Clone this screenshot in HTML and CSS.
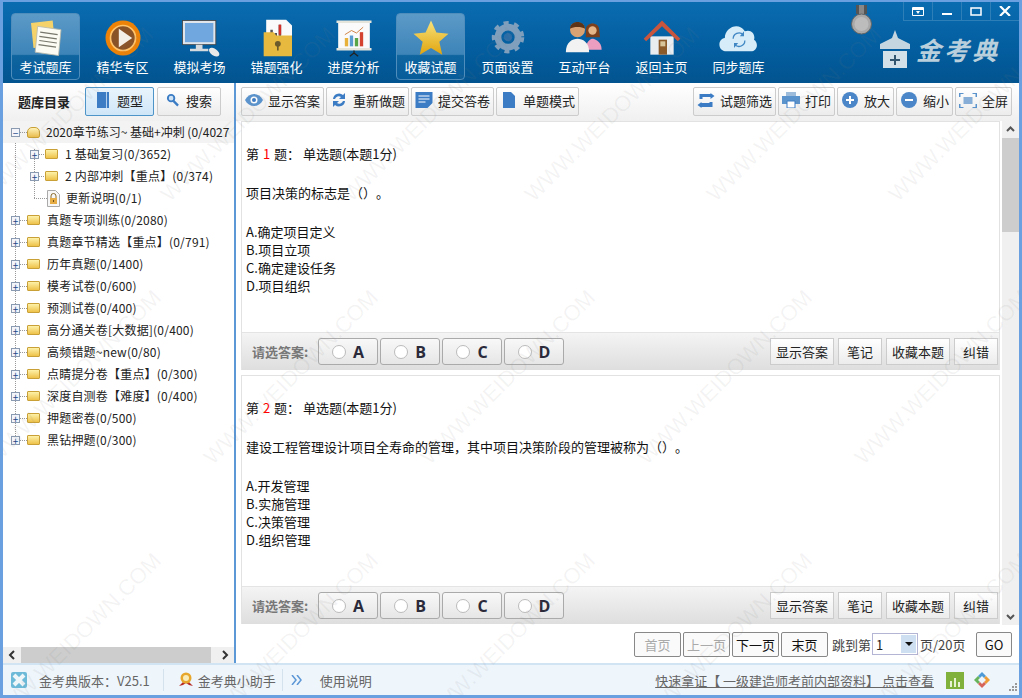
FILE: index.html
```html
<!DOCTYPE html>
<html lang="zh-CN">
<head>
    <meta charset="UTF-8">
    <title>金考典</title>
    <link rel="stylesheet" href="styles.css">
</head>
<body>
<div class="window">
    <!-- top bar -->
    <div class="top-bar">
        <div class="nav-item active">
            <svg viewBox="0 0 48 48"><path d="M6 6l26-3 3 30-26 3z" fill="#f6d36a"/><path d="M14 10l28 4-3 31-28-4z" fill="#fbfbf4" stroke="#b9b9a8"/><path d="M17 17l21 3M16 22l21 3M16 27l21 3M15 32l21 3" stroke="#77776c" stroke-width="1.5"/></svg>
            <span>考试题库</span>
        </div>
        <div class="nav-item">
            <svg viewBox="0 0 48 48"><circle cx="24" cy="24" r="21" fill="#ec8208"/><circle cx="24" cy="24" r="15" fill="#8a5327" stroke="#ffc46b" stroke-width="2"/><path d="M19 13l16 11-16 11z" fill="#f4efe6"/></svg>
            <span>精华专区</span>
        </div>
        <div class="nav-item">
            <svg viewBox="0 0 48 48"><rect x="3" y="3" width="40" height="29" fill="#dfe5ea" stroke="#444"/><rect x="6" y="6" width="34" height="23" fill="#6fa7de"/><path d="M19 32h8v5h-8zM12 37h22v3H12z" fill="#d5dade"/><ellipse cx="41" cy="41" rx="7" ry="4" fill="#e8e8e8" transform="rotate(35 41 41)"/></svg>
            <span>模拟考场</span>
        </div>
        <div class="nav-item">
            <svg viewBox="0 0 48 48"><path d="M11 2h24l7 7v22H11z" fill="#fafafa"/><path d="M16 14h3v14h-3zM21 18h3v10h-3zM26 8h3v20h-3z" fill="#555"/><path d="M26 8h3v12h-3z" fill="#d3302a"/><path d="M8 17h12l3 4h19v25H8z" fill="#e8b93f"/><circle cx="25" cy="31" r="3.500" fill="#6b5a2b"/><path d="M24 33h2v6h-2z" fill="#6b5a2b"/></svg>
            <span>错题强化</span>
        </div>
        <div class="nav-item">
            <svg viewBox="0 0 48 48"><path d="M3 3h42v3H3z" fill="#e5e5dc"/><path d="M5 6h38v30H5z" fill="#fafafa"/><path d="M3 36h42v3H3z" fill="#e5e5dc"/><path d="M13 24h4v10h-4z" fill="#e8b23a"/><path d="M19 21h4v13h-4z" fill="#5a9bd0"/><path d="M25 24h4v10h-4z" fill="#58a548"/><path d="M31 17h4v17h-4z" fill="#d3432f"/><path d="M13 20l8-5 6 3 8-7" stroke="#c9702a" fill="none"/><path d="M24 39v4M24 42l-5 4M24 42l5 4" stroke="#222" stroke-width="1.5"/></svg>
            <span>进度分析</span>
        </div>
        <div class="nav-item active">
            <svg viewBox="0 0 48 48"><defs><linearGradient id="star" x1="0" y1="0" x2="0" y2="1"><stop offset="0" stop-color="#f7e27a"/><stop offset="1" stop-color="#e0a40e"/></linearGradient></defs><path d="M24 3l6.500 14.500L45 19l-11 9.500L37.500 44 24 36l-13.500 8L14 28.500 3 19l14.500-1.500z" fill="url(#star)"/></svg>
            <span>收藏试题</span>
        </div>
        <div class="nav-item">
            <svg viewBox="0 0 48 48"><circle cx="24" cy="23" r="12" fill="none" stroke="#7f9fbd" stroke-width="8"/><circle cx="24" cy="23" r="17" fill="none" stroke="#7f9fbd" stroke-width="5" stroke-dasharray="6 6.400"/><circle cx="24" cy="23" r="5" fill="#2d6da6"/></svg>
            <span>页面设置</span>
        </div>
        <div class="nav-item">
            <svg viewBox="0 0 48 48"><circle cx="33" cy="14" r="7" fill="#c98a55"/><path d="M25 14c0-10 16-10 16 0l1 9H25z" fill="#7a3f1c"/><circle cx="33" cy="15" r="5" fill="#e5b58a"/><path d="M25 38c0-10 6-13 8-13s11 3 11 13z" fill="#ec9ec0"/><path d="M1 41c0-12 8-16 14-16s14 4 14 16z" fill="#f2f2f2"/><circle cx="15" cy="14" r="9" fill="#d9a273"/><path d="M6 13c0-11 18-11 18 0-4-3-14-3-18 0z" fill="#5d3416"/></svg>
            <span>互动平台</span>
        </div>
        <div class="nav-item">
            <svg viewBox="0 0 48 48"><path d="M10 22h28v22H10z" fill="#e9edf0"/><path d="M2 25L24 3l22 22-3 3L24 10 5 28z" fill="#c8553d"/><path d="M20 26h10v18H20z" fill="#8a5a2b"/><path d="M22 28h6v6h-6z" fill="#d8c49a"/></svg>
            <span>返回主页</span>
        </div>
        <div class="nav-item">
            <svg viewBox="0 0 48 48"><path d="M9 40c-11 0-11-15-2-16 0-13 17-20 24-8 8-3 13 4 11 10 6 4 4 14-4 14z" fill="#d6ecf8"/><path d="M17 25a7 7 0 0 1 12-5M31 27a7 7 0 0 1-12 5" fill="none" stroke="#3f86c4" stroke-width="1.500"/><path d="M30 16v6h-5zM18 36v-6h5z" fill="#3f86c4"/></svg>
            <span>同步题库</span>
        </div>
        <svg class="medal" width="21" height="30" viewBox="0 0 21 30"><path d="M5 0h11v9H5z" fill="#555"/><path d="M8 0h5v9H8z" fill="#888"/><circle cx="10.500" cy="19" r="10" fill="#a9a9a9" stroke="#666"/><circle cx="10.500" cy="19" r="7" fill="#bcbcbc"/></svg>
        <div class="brand">
            <svg width="30" height="38" viewBox="0 0 30 38"><path d="M15 0l3 8 12 6v5H0v-5l12-6z" fill="#c5d6e0"/><path d="M3 21h24v17H3z" fill="#d3e0e8"/><path d="M14 25h2v10h-2zM10 29h10v2H10z" fill="#34556e"/></svg>
            <span>金考典</span>
        </div>
        <div class="win-btns">
            <span class="win-btn"><svg width="12" height="9" viewBox="0 0 12 9"><path d="M.5.500h11v8H.5z" fill="none" stroke="#fff"/><path d="M1 1h10v2H1zM4 4h4L6 7z" fill="#fff"/></svg></span>
            <span class="win-btn"><svg width="12" height="9" viewBox="0 0 12 9"><path d="M1 6h10v2H1z" fill="#fff"/></svg></span>
            <span class="win-btn"><svg width="12" height="9" viewBox="0 0 12 9"><path d="M1 1h10v7H1z" fill="none" stroke="#fff" stroke-width="1.500"/></svg></span>
            <span class="win-btn"><svg width="12" height="10" viewBox="0 0 12 10"><path d="M1 0l5 5 5-5M1 10l5-5 5 5" fill="none" stroke="#fff" stroke-width="2.200"/></svg></span>
        </div>
    </div>

    <div class="main">
        <!-- left tree -->
        <div class="side">
            <div class="side-head">
                <strong class="side-title">题库目录</strong>
                <button class="tool-btn selected">
                    <svg width="14" height="16" viewBox="0 0 14 16"><path d="M1 0h12v16H1z" fill="#3b7cc4"/><path d="M10 0h1v16h-1z" fill="#b7d3ee"/></svg>题型
                </button>
                <button class="tool-btn search">
                    <svg width="14" height="16" viewBox="0 0 14 16"><circle cx="5.500" cy="6" r="3.500" fill="#cfe3f5" stroke="#3b7cc4" stroke-width="2"/><path d="M8 9l5 5" stroke="#3b7cc4" stroke-width="2.500"/></svg>搜索
                </button>
            </div>
            <div class="tree">
                <div class="tree-guide"></div>
                <div class="tree-guide inner"></div>
                <div class="tree-row hover"><i class="toggle">−</i><i class="folder open"></i><span>2020章节练习~ 基础+冲刺 (0/4027</span></div>
                <div class="tree-row sub"><i class="toggle">+</i><i class="folder"></i><span>1&nbsp;基础复习(0/3652)</span></div>
                <div class="tree-row sub"><i class="toggle">+</i><i class="folder"></i><span>2&nbsp;内部冲刺【重点】(0/374)</span></div>
                <div class="tree-row sub"><i class="toggle none"></i><svg class="lock-doc" width="13" height="17" viewBox="0 0 13 17"><path d="M.5.500h8l4 4v12H.5z" fill="#f7f7f7" stroke="#aaa"/><path d="M4 8V6a2.500 2.500 0 0 1 5 0v2" fill="none" stroke="#8a6a2a"/><path d="M3 8h7v6H3z" fill="#e6ad46"/><path d="M6 10h1v2H6z" fill="#6b4f1a"/></svg><span>更新说明(0/1)</span></div>
                <div class="tree-row"><i class="toggle">+</i><i class="folder"></i><span>真题专项训练(0/2080)</span></div>
                <div class="tree-row"><i class="toggle">+</i><i class="folder"></i><span>真题章节精选【重点】(0/791)</span></div>
                <div class="tree-row"><i class="toggle">+</i><i class="folder"></i><span>历年真题(0/1400)</span></div>
                <div class="tree-row"><i class="toggle">+</i><i class="folder"></i><span>模考试卷(0/600)</span></div>
                <div class="tree-row"><i class="toggle">+</i><i class="folder"></i><span>预测试卷(0/400)</span></div>
                <div class="tree-row"><i class="toggle">+</i><i class="folder"></i><span>高分通关卷[大数据](0/400)</span></div>
                <div class="tree-row"><i class="toggle">+</i><i class="folder"></i><span>高频错题~new(0/80)</span></div>
                <div class="tree-row"><i class="toggle">+</i><i class="folder"></i><span>点睛提分卷【重点】(0/300)</span></div>
                <div class="tree-row"><i class="toggle">+</i><i class="folder"></i><span>深度自测卷【难度】(0/400)</span></div>
                <div class="tree-row"><i class="toggle">+</i><i class="folder"></i><span>押题密卷(0/500)</span></div>
                <div class="tree-row"><i class="toggle">+</i><i class="folder"></i><span>黑钻押题(0/300)</span></div>
            </div>
            <div class="hscroll">
                <svg class="arrow" width="18" height="16" viewBox="0 0 18 16"><path d="M11 4L7 8l4 4" fill="none" stroke="#333" stroke-width="2"/></svg>
                <div class="hthumb"></div>
                <svg class="arrow" width="18" height="16" viewBox="0 0 18 16"><path d="M7 4l4 4-4 4" fill="none" stroke="#333" stroke-width="2"/></svg>
            </div>
        </div>

        <!-- content -->
        <div class="content">
            <div class="toolbar">
                <button class="tool-btn">
                    <svg width="18" height="12" viewBox="0 0 18 12"><path d="M0 6c4-8 14-8 18 0-4 8-14 8-18 0z" fill="#5b93cc"/><circle cx="9" cy="6" r="3.500" fill="#fff"/><circle cx="9" cy="6" r="2" fill="#3b7cc4"/></svg>显示答案
                </button>
                <button class="tool-btn">
                    <svg width="18" height="16" viewBox="0 0 18 16"><path d="M3 7a6 6 0 0 1 10-4l2-2v6h-6l2-2a4 4 0 0 0-6 2zM15 9a6 6 0 0 1-10 4l-2 2V9h6l-2 2a4 4 0 0 0 6-2z" fill="#3b7cc4"/></svg>重新做题
                </button>
                <button class="tool-btn">
                    <svg width="17" height="16" viewBox="0 0 17 16"><path d="M0 0h17v11l-5 5H0z" fill="#3b7cc4"/><path d="M3 4h11M3 7h11M3 10h7" stroke="#fff"/></svg>提交答卷
                </button>
                <button class="tool-btn">
                    <svg width="14" height="16" viewBox="0 0 14 16"><path d="M1 0h8l4 4v12H1z" fill="#3b7cc4"/></svg>单题模式
                </button>
                <div class="spacer"></div>
                <button class="tool-btn">
                    <svg width="17" height="15" viewBox="0 0 17 15"><path d="M2 6V1h11V0l4 3-4 3V4H5v2zM15 9v5H4v1l-4-3 4-3v1h8V9z" fill="#3b7cc4"/></svg>试题筛选
                </button>
                <button class="tool-btn">
                    <svg width="18" height="16" viewBox="0 0 18 16"><path d="M4 0h10v4H4z" fill="#9dbcdc"/><path d="M0 4h18v8H0z" fill="#5b93cc"/><path d="M5 9h8v7H5z" fill="#fff" stroke="#3b7cc4"/></svg>打印
                </button>
                <button class="tool-btn">
                    <svg width="16" height="16" viewBox="0 0 16 16"><circle cx="8" cy="8" r="8" fill="#4a86c8"/><path d="M4 7h8v2H4zM7 4h2v8H7z" fill="#fff"/></svg>放大
                </button>
                <button class="tool-btn">
                    <svg width="16" height="16" viewBox="0 0 16 16"><circle cx="8" cy="8" r="8" fill="#4a86c8"/><path d="M4 7h8v2H4z" fill="#fff"/></svg>缩小
                </button>
                <button class="tool-btn">
                    <svg width="17" height="15" viewBox="0 0 17 15"><path d="M0 4V0h4M13 0h4v4M17 11v4h-4M4 15H0v-4" fill="none" stroke="#5b93cc" stroke-width="2"/><path d="M4 4h9v7H4z" fill="#86aed6"/></svg>全屏
                </button>
            </div>

            <div class="question-wrap">
                <div class="questions">
                    <div class="question">
                        <div class="q-body">
                            <p class="q-title">第 <em>1</em> 题： 单选题(本题1分)</p>
                            <p class="q-stem">项目决策的标志是（）。</p>
                            <p class="q-opts">A.确定项目定义<br>B.项目立项<br>C.确定建设任务<br>D.项目组织</p>
                        </div>
                        <div class="answer-bar">
                            <span class="answer-label">请选答案:</span>
                            <button class="opt-btn"><i></i>A</button>
                            <button class="opt-btn"><i></i>B</button>
                            <button class="opt-btn"><i></i>C</button>
                            <button class="opt-btn"><i></i>D</button>
                            <div class="spacer"></div>
                            <button class="act-btn">显示答案</button>
                            <button class="act-btn short">笔记</button>
                            <button class="act-btn">收藏本题</button>
                            <button class="act-btn short">纠错</button>
                        </div>
                    </div>
                    <div class="question">
                        <div class="q-body">
                            <p class="q-title">第 <em>2</em> 题： 单选题(本题1分)</p>
                            <p class="q-stem">建设工程管理设计项目全寿命的管理，其中项目决策阶段的管理被称为（）。</p>
                            <p class="q-opts">A.开发管理<br>B.实施管理<br>C.决策管理<br>D.组织管理</p>
                        </div>
                        <div class="answer-bar">
                            <span class="answer-label">请选答案:</span>
                            <button class="opt-btn"><i></i>A</button>
                            <button class="opt-btn"><i></i>B</button>
                            <button class="opt-btn"><i></i>C</button>
                            <button class="opt-btn"><i></i>D</button>
                            <div class="spacer"></div>
                            <button class="act-btn">显示答案</button>
                            <button class="act-btn short">笔记</button>
                            <button class="act-btn">收藏本题</button>
                            <button class="act-btn short">纠错</button>
                        </div>
                    </div>
                </div>
                <div class="vscroll">
                    <svg class="v-arrow" width="17" height="17" viewBox="0 0 17 17"><path d="M5 10l3.500-3.500L12 10" fill="none" stroke="#555" stroke-width="2"/></svg>
                    <div class="vthumb"></div>
                    <div class="v-rest"></div>
                    <svg class="v-arrow" width="17" height="17" viewBox="0 0 17 17"><path d="M5 7l3.500 3.500L12 7" fill="none" stroke="#555" stroke-width="2"/></svg>
                </div>
            </div>

            <div class="pager">
                <button class="page-btn off">首页</button>
                <button class="page-btn off">上一页</button>
                <button class="page-btn">下一页</button>
                <button class="page-btn">末页</button>
                <span class="jump">跳到第</span>
                <div class="page-select"><span>1</span><i></i></div>
                <span class="pages">页/20页</span>
                <button class="page-btn go">GO</button>
            </div>
        </div>
    </div>

    <!-- status bar -->
    <div class="status-bar">
        <svg class="st-logo" width="16" height="16" viewBox="0 0 16 16"><rect width="16" height="16" rx="2" fill="#6dbad8"/><path d="M3 3l10 10M13 3L3 13" stroke="#eef6fa" stroke-width="4"/></svg>
        <span class="st-version">金考典版本：V25.1</span>
        <span class="st-sep"></span>
        <svg class="st-medal" width="16" height="16" viewBox="0 0 16 16"><path d="M1 14l5-5 4 0 5 5-4-1-3-2-3 2z" fill="#b52b25"/><circle cx="8" cy="6" r="5.500" fill="#e7a72c"/><circle cx="8" cy="6" r="3" fill="#f9ecb8"/></svg>
        <span class="st-helper">金考典小助手</span>
        <span class="st-sep"></span>
        <svg class="st-more" width="11" height="10" viewBox="0 0 11 10"><path d="M1 0l4 5-4 5M6 0l4 5-4 5" fill="none" stroke="#5c97d6" stroke-width="1.500"/></svg>
        <span class="st-help">使用说明</span>
        <div class="spacer"></div>
        <span class="st-link">快速拿证【 一级建造师考前内部资料】 点击查看</span>
        <svg class="st-chart" width="18" height="17" viewBox="0 0 18 17"><rect width="18" height="17" fill="#7fb13c"/><path d="M4 9h2v6H4zM8 6h2v9H8zM12 10h2v5h-2z" fill="#e8f3d3"/></svg>
        <svg class="st-app" width="16" height="16" viewBox="0 0 16 16"><path d="M8 0l4 4-2 2-2-2-2 2-2-2z" fill="#4d9ad6"/><path d="M12 4l4 4-4 4-2-2 2-2-2-2z" fill="#ee9a35"/><path d="M4 4l2 2-2 2 2 2-2 2-4-4z" fill="#68b45c"/><path d="M6 10l2 2 2-2 2 2-4 4-4-4z" fill="#d5655a"/></svg>
        <svg class="st-grip" width="8" height="8" viewBox="0 0 8 8"><path d="M6 0h2v2H6zM3 3h2v2H3zM6 3h2v2H6zM0 6h2v2H0zM3 6h2v2H3zM6 6h2v2H6z" fill="#999"/></svg>
    </div>

    <!-- watermark -->
    <div class="watermark">
        <div class="wm-row first">
            <span>WWW.WEIDOWN.COM</span><span>WWW.WEIDOWN.COM</span><span>WWW.WEIDOWN.COM</span><span>WWW.WEIDOWN.COM</span><span>WWW.WEIDOWN.COM</span><span>WWW.WEIDOWN.COM</span>
        </div>
        <div class="wm-row">
            <span>WWW.WEIDOWN.COM</span><span>WWW.WEIDOWN.COM</span><span>WWW.WEIDOWN.COM</span><span>WWW.WEIDOWN.COM</span><span>WWW.WEIDOWN.COM</span>
        </div>
        <div class="wm-row">
            <span>WWW.WEIDOWN.COM</span><span>WWW.WEIDOWN.COM</span><span>WWW.WEIDOWN.COM</span><span>WWW.WEIDOWN.COM</span><span>WWW.WEIDOWN.COM</span>
        </div>
    </div>
</div>
</body>
</html>
```

FILE: styles.css
```css
* {
    margin: 0;
    padding: 0;
    box-sizing: border-box;
}

body {
    width: 1022px;
    height: 698px;
    overflow: hidden;
    background: #6a9fe0;
    font-family: "Noto Sans CJK SC", "Liberation Sans", sans-serif;
    font-size: 13px;
    color: #222;
    text-spacing-trim: space-all;
}

.window {
    position: relative;
    width: 1022px;
    height: 698px;
    border: 3px solid #6a9fe0;
    border-top: 2px solid #6a9fe0;
    display: flex;
    flex-direction: column;
    background: #fff;
}

.spacer {
    flex: 1;
}

/* top bar */
.top-bar {
    position: relative;
    height: 81px;
    flex: none;
    display: flex;
    gap: 8px;
    padding: 11px 0 0 8px;
    background: linear-gradient(180deg, #0a6cb0 0%, #035d9e 60%, #02548f 100%);
}

.nav-item {
    width: 69px;
    height: 67px;
    flex: none;
    display: flex;
    flex-direction: column;
    align-items: center;
    color: #fff;
    font-size: 13px;
    line-height: 18px;
    border: 1px solid transparent;
    border-radius: 4px;
    padding-top: 4px;
}

.nav-item svg {
    width: 40px;
    height: 40px;
    flex: none;
}

.nav-item.active {
    border-color: #4f8dbd;
    background: linear-gradient(180deg, #5c9ac8 0%, #3d84b8 62%, #0f659f 64%, #075c9a 100%);
}

.medal {
    position: absolute;
    left: 848px;
    top: 3px;
}

.brand {
    position: absolute;
    left: 877px;
    top: 28px;
    display: flex;
    align-items: center;
    gap: 6px;
    color: #b9cfdc;
    font-size: 25px;
    font-weight: 700;
    font-style: italic;
    letter-spacing: 3px;
    line-height: 38px;
}

.win-btns {
    position: absolute;
    right: 0;
    top: 0;
    display: flex;
}

.win-btn {
    width: 29px;
    height: 19px;
    display: flex;
    align-items: center;
    justify-content: center;
    border-left: 1px solid #2e7fb8;
    border-bottom: 1px solid #2e7fb8;
}

.main {
    flex: 1;
    min-height: 0;
    display: flex;
}

/* left side */
.side {
    width: 233px;
    flex: none;
    border-right: 2px solid #5c97d6;
    display: flex;
    flex-direction: column;
}

.side-head {
    height: 38px;
    flex: none;
    display: flex;
    align-items: center;
    gap: 3px;
    padding: 0 0 2px 15px;
    background: linear-gradient(180deg, #fff, #f0f0f0);
}

.side-title {
    width: 64px;
    font-size: 13px;
}

.tool-btn {
    height: 29px;
    display: flex;
    align-items: center;
    gap: 5px;
    padding: 0 3px 2px 3px;
    background: linear-gradient(180deg, #fff, #ececec);
    border: 1px solid #ccc;
    border-radius: 2px;
    font-family: inherit;
    font-size: 13px;
    color: #222;
    white-space: nowrap;
}

.toolbar .tool-btn svg {
    width: 18px;
}

.side-head .tool-btn {
    width: 69px;
    padding: 0 10px 2px;
    gap: 7px;
}

.side-head .tool-btn.search {
    width: 64px;
    padding: 0 8px 2px;
}

.tool-btn.selected {
    background: linear-gradient(180deg, #e9f4fc, #cfe6f8);
    border-color: #4d94c8;
}

.tree {
    position: relative;
    flex: 1;
    min-height: 0;
    overflow: hidden;
    font-size: 12px;
    letter-spacing: .2px;
}

.tree-guide {
    position: absolute;
    left: 12px;
    top: 15px;
    height: 304px;
    border-left: 1px dotted #999;
}

.tree-guide.inner {
    left: 31px;
    top: 28px;
    height: 49px;
}

.tree-row {
    position: relative;
    height: 22px;
    display: flex;
    align-items: center;
    white-space: nowrap;
    padding-left: 8px;
    line-height: 22px;
}

.tree-row.hover {
    background: #f3f3f3;
    letter-spacing: 0;
}

.tree-row.sub {
    padding-left: 27px;
}

.toggle {
    position: relative;
    width: 9px;
    height: 9px;
    flex: none;
    border: 1px solid #8a9ab0;
    background: #f3f5fa;
    margin-right: 7px;
    font-style: normal;
    font-size: 10px;
    line-height: 7px;
    text-align: center;
    color: #234a88;
}

.toggle::after {
    content: "";
    position: absolute;
    left: 8px;
    top: 3px;
    width: 7px;
    border-top: 1px dotted #999;
}

.tree-row.sub .toggle {
    margin-right: 6px;
}

.toggle.none {
    border: none;
    background: none;
}

.toggle.none::after {
    left: 4px;
    top: 4px;
    width: 13px;
}

.folder {
    position: relative;
    width: 13px;
    height: 10px;
    flex: none;
    margin-right: 7px;
    background: linear-gradient(180deg, #fdf1a8, #eec24a);
    border: 1px solid #c9a035;
    border-radius: 1px;
}

.folder.open {
    height: 11px;
    background: linear-gradient(180deg, #fff3b8, #e8bc4e);
    border-radius: 5px 5px 2px 2px;
    margin-right: 6px;
}

.lock-doc {
    flex: none;
    margin: 0 6px 0 2px;
}

.hscroll {
    height: 16px;
    flex: none;
    display: flex;
    align-items: center;
    justify-content: space-between;
    background: #f0f0f0;
}

.hthumb {
    width: 190px;
    height: 16px;
    margin-right: auto;
    background: #cdcdcd;
}

/* right side */
.content {
    flex: 1;
    min-width: 0;
    display: flex;
    flex-direction: column;
}

.toolbar {
    height: 38px;
    flex: none;
    display: flex;
    align-items: center;
    gap: 2px;
    padding: 0 7px 2px 5px;
    background: linear-gradient(180deg, #fff, #f0f0f0);
}

.question-wrap {
    flex: 1;
    min-height: 0;
    display: flex;
    padding-left: 5px;
}

.questions {
    flex: 1;
    min-width: 0;
    display: flex;
    flex-direction: column;
    gap: 5px;
    overflow: hidden;
}

.question {
    height: 249px;
    flex: none;
    display: flex;
    flex-direction: column;
    border: 1px solid #e2e2e2;
    border-bottom: none;
}

.q-body {
    flex: 1;
    padding: 23px 4px 0;
    font-size: 13px;
    line-height: 18.300px;
    color: #111;
}

.q-title em {
    margin: 0 1px;
    color: #f00;
    font-style: normal;
}

.q-stem {
    margin-top: 21px;
}

.q-opts {
    margin-top: 20px;
}

.answer-bar {
    height: 38px;
    flex: none;
    display: flex;
    align-items: center;
    gap: 2px;
    padding: 0 1px 0 10px;
    background: linear-gradient(180deg, #f4f4f4, #dedede);
    border-top: 1px solid #e4e4e4;
}

.answer-label {
    width: 64px;
    color: #777;
    font-weight: 700;
    font-size: 13px;
    white-space: nowrap;
}

.opt-btn {
    width: 60px;
    height: 27px;
    display: flex;
    align-items: center;
    justify-content: center;
    gap: 7px;
    background: linear-gradient(180deg, #f8f8f8, #e6e6e6);
    border: 1px solid #aaa;
    border-radius: 3px;
    font-family: "Open Sans", sans-serif;
    font-weight: 700;
    font-size: 16px;
    color: #2a2a3a;
}

.opt-btn i {
    width: 14px;
    height: 14px;
    border-radius: 50%;
    border: 1px solid #bbb;
    background: #fff;
}

.act-btn {
    width: 64px;
    height: 27px;
    margin-left: 2px;
    padding-bottom: 1px;
    background: linear-gradient(180deg, #fff, #ececec);
    border: 1px solid #ccc;
    font-family: inherit;
    font-size: 13px;
    color: #222;
}

.act-btn.short {
    width: 44px;
}

.vscroll {
    width: 17px;
    flex: none;
    margin-left: 2px;
    display: flex;
    flex-direction: column;
    background: #f0f0f0;
}

.v-arrow {
    flex: none;
}

.vthumb {
    height: 94px;
    background: #cdcdcd;
}

.v-rest {
    flex: 1;
}

.pager {
    height: 38px;
    flex: none;
    display: flex;
    align-items: center;
    gap: 2px;
    padding: 0 7px 0 398px;
    white-space: nowrap;
}

.page-btn {
    width: 47px;
    height: 25px;
    background: #fafafa;
    border: 1px solid #888;
    border-radius: 2px;
    font-family: inherit;
    font-size: 13px;
    color: #111;
}

.page-btn.off {
    color: #aaa;
}

.page-btn.go {
    width: 36px;
    margin-left: auto;
}

.jump {
    margin-left: 2px;
    color: #444;
}

.page-select {
    width: 46px;
    height: 22px;
    margin-left: -1px;
    display: flex;
    align-items: center;
    justify-content: space-between;
    padding: 0 1px 0 3px;
    border: 1px solid #b4b4d4;
}

.page-select i {
    width: 15px;
    height: 18px;
    background: #cfdff2;
    position: relative;
}

.page-select i::after {
    content: "";
    position: absolute;
    left: 4px;
    top: 7px;
    border: 4px solid transparent;
    border-top-color: #111;
}

.pages {
    color: #444;
}

/* status bar */
.status-bar {
    height: 32px;
    flex: none;
    display: flex;
    align-items: center;
    background: #eef5fb;
    border-top: 2px solid #d0e4f4;
    color: #666;
    font-size: 13px;
    white-space: nowrap;
}

.st-logo {
    margin-left: 8px;
}

.st-version {
    margin-left: 12px;
}

.st-sep {
    width: 1px;
    height: 22px;
    background: #d4e2ee;
}

.st-version + .st-sep {
    margin-left: 13px;
}

.st-medal {
    margin-left: 14px;
}

.st-helper {
    margin: 0 6px 0 4px;
}

.st-more {
    margin-left: 8px;
}

.st-help {
    margin-left: 18px;
}

.st-link {
    text-decoration: underline;
}

.st-chart {
    margin-left: 12px;
}

.st-app {
    margin: 0 19px 0 10px;
}

.st-grip {
    align-self: flex-end;
    margin: 0 2px 4px 0;
}

/* diagonal site watermark, lies over everything */
.watermark {
    position: absolute;
    inset: 0;
    overflow: hidden;
    pointer-events: none;
    padding-top: 179px;
}

.wm-row {
    display: flex;
    height: 263px;
    margin-left: -3px;
}

.wm-row.first {
    margin-left: -11px;
}

.wm-row span {
    flex: none;
    width: 217px;
    height: 26px;
    font-family: "Liberation Sans", sans-serif;
    font-size: 22px;
    line-height: 26px;
    white-space: nowrap;
    color: rgba(128, 128, 128, .09);
    transform: rotate(-45deg);
    transform-origin: 0 100%;
}

.wm-row.first span {
    width: 182px;
}
```
